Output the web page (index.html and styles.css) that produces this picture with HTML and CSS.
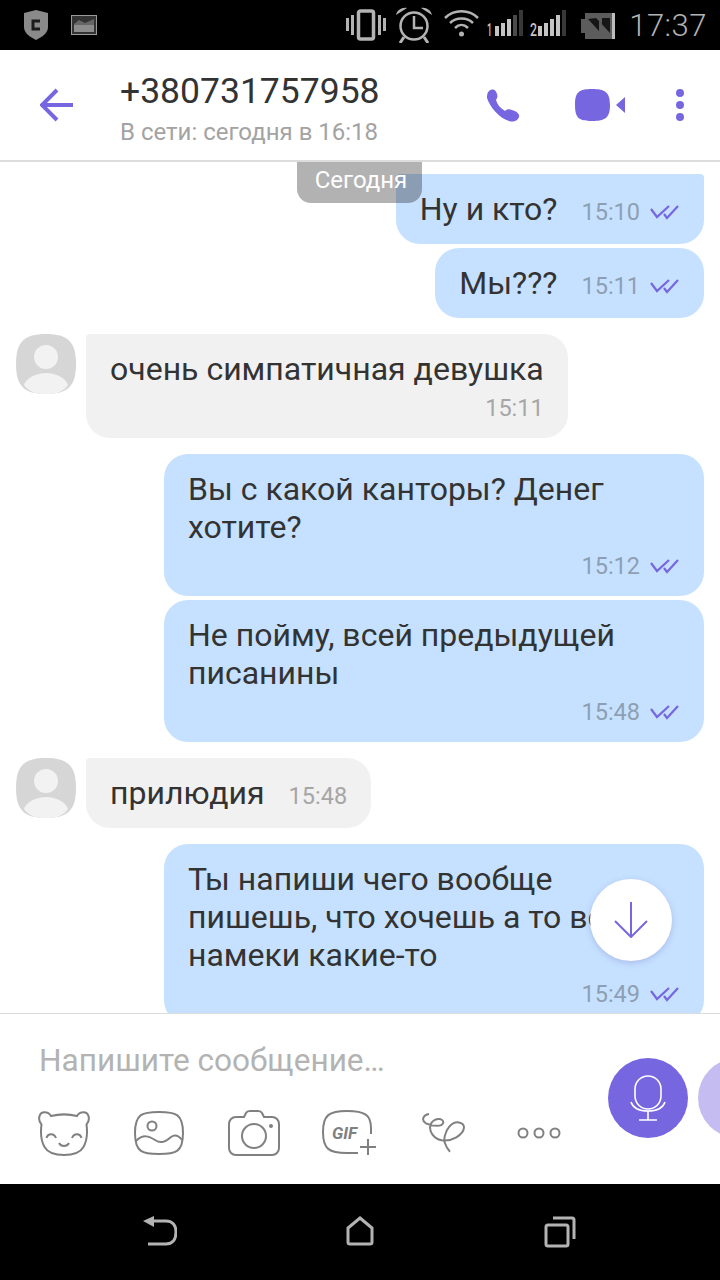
FILE: index.html
```html
<!DOCTYPE html>
<html lang="ru">
<head>
    <meta charset="UTF-8">
    <title>Чат</title>
    <link rel="stylesheet" href="styles.css">
</head>
<body>
    <svg class="defs">
        <symbol id="ticks" viewBox="0 0 30 16">
            <path d="M1 4 L7 12 L19 1 M14 9 L17 13 L28 1" fill="none" stroke="#7667e0" stroke-width="2.200"/>
        </symbol>
        <symbol id="avatar" viewBox="0 0 60 60">
            <path d="M30 0 C52 0 60 8 60 30 C60 52 52 60 30 60 C8 60 0 52 0 30 C0 8 8 0 30 0Z" fill="#d6d6d6"/>
            <circle cx="30" cy="23" r="12" fill="#f2f2f2"/>
            <path d="M8 51 C10 44 20 39 30 39 C40 39 50 44 52 51 C47 58 40 60 30 60 C20 60 13 58 8 51Z" fill="#f2f2f2"/>
        </symbol>
    </svg>

    <div class="app">
        <div class="status-bar">
            <div class="status-left">
                <svg width="24" height="30" viewBox="0 0 24 30"><path d="M12 0 L24 3 V17 C24 23 18 27 12 30 C6 27 0 23 0 17 V3Z" fill="#8a8a8a"/><path d="M16 11 H9 V19 H16" fill="none" stroke="#1c1c1c" stroke-width="3"/></svg>
                <svg width="26" height="20" viewBox="0 0 26 20"><rect x="0.5" y="0.5" width="25" height="19" fill="#333" stroke="#9a9a9a"/><rect x="3" y="10" width="20" height="7" fill="#8c8c8c"/><path d="M3 9 L8 5 L14 8 L23 4 V10 H3Z" fill="#666"/></svg>
            </div>
            <div class="status-right">
                <svg width="42" height="32" viewBox="0 0 42 32"><g fill="none" stroke="#b3b3b3"><rect x="13.500" y="2" width="15" height="28" rx="2" stroke-width="3.500"/><path d="M7.500 6 V26 M34.500 6 V26" stroke-width="3"/><path d="M2.500 9 V22 M39.500 9 V22" stroke-width="3"/></g></svg>
                <svg class="st-alarm" width="36" height="36" viewBox="0 0 36 36"><g fill="none" stroke="#b3b3b3"><circle cx="18" cy="19" r="13.500" stroke-width="2.500"/><path d="M18 9 V21 H27" stroke-width="2.500"/><path d="M8 30 L4 36 M28 30 L32 36" stroke-width="3"/></g><path d="M0 8 C1 3 6 0 11 1Z M36 8 C35 3 30 0 25 1Z" fill="#b3b3b3"/></svg>
                <svg class="st-wifi" width="35" height="28" viewBox="0 0 35 28"><g fill="none" stroke="#b3b3b3" stroke-width="2.500"><path d="M1 9 C10 0 25 0 34 9"/><path d="M6 14 C12 8 23 8 29 14"/><path d="M11 19 C15 15 20 15 24 19"/></g><circle cx="17.500" cy="25" r="2.500" fill="#b3b3b3"/></svg>
                <svg class="st-sim" width="36" height="34" viewBox="0 0 36 34"><text x="0" y="28" class="sim-num" textLength="5" lengthAdjust="spacingAndGlyphs">1</text><g fill="#c4c4c4"><rect x="8" y="18" width="4" height="10"/><rect x="14" y="15" width="4" height="13"/><rect x="20" y="11" width="4" height="17"/></g><rect x="26" y="7" width="4" height="21" fill="#4a4a4a"/><rect x="32" y="2" width="4" height="26" fill="#383838"/></svg>
                <svg class="st-sim2" width="37" height="34" viewBox="0 0 37 34"><text x="0" y="28" class="sim-num" textLength="7" lengthAdjust="spacingAndGlyphs">2</text><g fill="#c4c4c4"><rect x="8" y="18" width="4" height="10"/><rect x="14" y="15" width="4" height="13"/><rect x="20" y="11" width="4" height="17"/><rect x="26" y="7" width="4" height="21"/></g><rect x="32" y="2" width="4" height="26" fill="#383838"/></svg>
                <svg class="st-battery" width="34" height="26" viewBox="0 0 34 26"><rect x="0" y="6" width="4" height="14" fill="#5c5c5c"/><rect x="4" y="0" width="27" height="26" fill="#5c5c5c"/><path d="M7 6 L18 18 V8 L29 20 V5 H21 V11 L15 5Z" fill="#161616"/><rect x="31" y="0" width="3" height="26" fill="#bdbdbd"/></svg>
                <span class="clock">17:37</span>
            </div>
        </div>

        <div class="chat-header">
            <svg class="back" width="34" height="34" viewBox="0 0 34 34"><path d="M33 17 H3 M17 2 L2 17 L17 32" fill="none" stroke="#7667e0" stroke-width="4"/></svg>
            <div class="contact">
                <div class="contact-phone">+380731757958</div>
                <div class="contact-seen">В сети: сегодня в 16:18</div>
            </div>
            <svg class="act-call" width="33" height="33" viewBox="0 0 33 33"><path d="M2 2 C6 -1 9 1 10 5 C11 8 10 9 9 11 C10 15 13 19 18 22 C20 20 22 20 25 21 C29 22 33 25 32 28 C30 33 25 33 22 32 C12 29 3 18 0 9 C0 6 0 4 2 2Z" fill="#7667e0"/></svg>
            <svg class="act-video" width="50" height="32" viewBox="0 0 50 32"><path d="M17 0 C30 0 35 3 35 16 C35 29 30 32 17 32 C4 32 0 29 0 16 C0 3 4 0 17 0Z M41 16 L50 8 V24Z" fill="#7667e0"/></svg>
            <svg class="act-more" width="14" height="32" viewBox="0 0 14 32"><g fill="#7667e0"><circle cx="7" cy="4" r="4"/><circle cx="7" cy="16" r="4"/><circle cx="7" cy="28" r="4"/></g></svg>
        </div>

        <div class="chat">
            <div class="date-badge">Сегодня</div>

            <div class="msg sent msg-first inline">
                <span class="msg-text">Ну и кто?</span>
                <span class="msg-meta"><span class="msg-time">15:10</span><svg class="tick" width="30" height="16"><use href="#ticks"/></svg></span>
            </div>
            <div class="msg sent msg-near inline">
                <span class="msg-text">Мы???</span>
                <span class="msg-meta"><span class="msg-time">15:11</span><svg class="tick" width="30" height="16"><use href="#ticks"/></svg></span>
            </div>

            <div class="row-in">
                <svg class="avatar" width="60" height="60"><use href="#avatar"/></svg>
                <div class="msg received">
                    <div class="msg-text">очень симпатичная девушка</div>
                    <div class="msg-meta"><span class="msg-time">15:11</span></div>
                </div>
            </div>

            <div class="msg sent wide">
                <div class="msg-text">Вы с какой канторы? Денег хотите?</div>
                <div class="msg-meta"><span class="msg-time">15:12</span><svg class="tick" width="30" height="16"><use href="#ticks"/></svg></div>
            </div>
            <div class="msg sent wide msg-near">
                <div class="msg-text">Не пойму, всей предыдущей писанины</div>
                <div class="msg-meta"><span class="msg-time">15:48</span><svg class="tick" width="30" height="16"><use href="#ticks"/></svg></div>
            </div>

            <div class="row-in">
                <svg class="avatar" width="60" height="60"><use href="#avatar"/></svg>
                <div class="msg received inline">
                    <span class="msg-text">прилюдия</span>
                    <span class="msg-meta"><span class="msg-time">15:48</span></span>
                </div>
            </div>

            <div class="msg sent wide">
                <div class="msg-text">Ты напиши чего вообще пишешь, что хочешь а то все намеки какие-то</div>
                <div class="msg-meta"><span class="msg-time">15:49</span><svg class="tick" width="30" height="16"><use href="#ticks"/></svg></div>
            </div>

            <div class="scroll-down">
                <svg width="34" height="36" viewBox="0 0 34 36"><path d="M17 0 V35 M1 19 L17 35 L33 19" fill="none" stroke="#7667e0" stroke-width="2"/></svg>
            </div>
        </div>

        <div class="composer">
            <div class="composer-main">
                <div class="placeholder">Напишите сообщение…</div>
                <div class="tools">
                    <div class="tool">
                        <svg width="52" height="46" viewBox="0 0 52 46"><g fill="none" stroke="#808080" stroke-width="2"><path d="M13 6 C10 1 3 1 1.500 6 C0.500 10 2 13 3.500 14.500 C2.500 22 2.500 30 6.500 37 C10 43 16 45 26 45 C36 45 42 43 45.500 37 C49.500 30 49.500 22 48.500 14.500 C50 13 51.500 10 50.500 6 C49 1 42 1 39 6 C31 4 21 4 13 6Z"/><path d="M8.500 28 C10 23 16 23 18 28"/><path d="M34 28 C36 23 42 23 43.500 28"/><path d="M21 33 C23 37 29 37 31 33"/></g></svg>
                    </div>
                    <div class="tool">
                        <svg width="50" height="44" viewBox="0 0 50 44"><g fill="none" stroke="#808080" stroke-width="2"><path d="M25 1 C42 1 49 3 49 22 C49 41 42 43 25 43 C8 43 1 41 1 22 C1 3 8 1 25 1Z"/><circle cx="18" cy="15" r="4.500"/><path d="M2 30 C9 23 15 25 21 29 C27 33 31 31 37 26 C41 23 45 25 48 29"/></g></svg>
                    </div>
                    <div class="tool">
                        <svg width="52" height="46" viewBox="0 0 52 46"><g fill="none" stroke="#808080" stroke-width="2"><path d="M16 7 L18 3 C19 1 20 1 22 1 H30 C32 1 33 1 34 3 L36 7 H44 C48 7 51 10 51 14 V38 C51 42 48 45 44 45 H8 C4 45 1 42 1 38 V14 C1 10 4 7 8 7Z"/><circle cx="26" cy="26" r="12"/></g><circle cx="43" cy="16" r="2" fill="#808080"/></svg>
                    </div>
                    <div class="tool">
                        <svg width="56" height="46" viewBox="0 0 56 46"><g fill="none" stroke="#808080" stroke-width="2"><path d="M50 24 V18 C50 5 44 1 26 1 C8 1 2 5 2 22 C2 39 8 43 26 43 H37"/><path d="M47 29 V45 M39 37 H55"/></g><text x="11" y="29" class="gif-label">GIF</text></svg>
                    </div>
                    <div class="tool">
                        <svg width="44" height="40" viewBox="0 0 44 40"><path d="M7 1 C1.300 2 -1.300 7 4 10.300 C9.700 13 21.300 14.700 21.300 9.300 C21.300 4.700 12 4.700 8.700 11.300 C6.300 18 11.300 25.300 19.700 27.300 C29.700 28.700 41.300 22 42 14.700 C42 8.700 33 7 27.300 13.700 C23 18.700 21.300 27 23 30.300 C24 33.700 25.700 36.300 28 38.700" fill="none" stroke="#808080" stroke-width="2"/></svg>
                    </div>
                    <div class="tool">
                        <svg width="44" height="12" viewBox="0 0 44 12"><g fill="none" stroke="#808080" stroke-width="2"><circle cx="6" cy="6" r="4.500"/><circle cx="22" cy="6" r="4.500"/><circle cx="38" cy="6" r="4.500"/></g></svg>
                    </div>
                </div>
            </div>
            <div class="send-buttons">
                <div class="round-btn mic">
                    <svg width="36" height="46" viewBox="0 0 36 46"><g fill="none" stroke="#fff" stroke-width="1.600"><rect x="5" y="1" width="26" height="33" rx="13"/><path d="M1 27 C3 33 9 36 18 36 C27 36 33 33 35 27"/><path d="M18 36 V45 M9 45 H27"/></g></svg>
                </div>
                <div class="round-btn second"></div>
            </div>
        </div>

        <div class="nav-bar">
            <div class="nav-item">
                <svg width="34" height="30" viewBox="0 0 34 30"><path d="M5 5 H23 C29 5 33 9 33 16 C33 24 29 28 23 28 H5" fill="none" stroke="#b3b3b3" stroke-width="3"/><path d="M0 5 L11 0 V11Z" fill="#b3b3b3"/></svg>
            </div>
            <div class="nav-item">
                <svg width="28" height="30" viewBox="0 0 28 30"><path d="M14 2 L26 12 V26 C26 27.500 25.500 28 24 28 H4 C2.500 28 2 27.500 2 26 V12Z" fill="none" stroke="#b3b3b3" stroke-width="3"/></svg>
            </div>
            <div class="nav-item">
                <svg width="32" height="32" viewBox="0 0 32 32"><g fill="none" stroke="#b3b3b3" stroke-width="3"><rect x="2" y="9" width="22" height="21" rx="2"/><path d="M9 2 H28 C29.500 2 30 2.500 30 4 V23"/></g></svg>
            </div>
        </div>
    </div>
</body>
</html>
```

FILE: styles.css
```css
html, body {
    margin: 0;
    padding: 0;
}
body {
    font-family: Roboto, "Noto Sans", sans-serif;
    color: #333;
    background-color: #fff;
}
.defs {
    display: none;
}
svg {
    display: block;
    flex: none;
}
.app {
    width: 720px;
    height: 1280px;
    display: flex;
    flex-direction: column;
    overflow: hidden;
}

/* status bar */
.status-bar {
    height: 50px;
    background-color: #000;
    display: flex;
    justify-content: space-between;
    align-items: center;
    padding: 0 13px 0 24px;
    flex: none;
}
.status-left, .status-right {
    display: flex;
    align-items: center;
}
.status-left {
    gap: 23px;
}
.st-alarm {
    margin-left: 9px;
}
.st-wifi {
    margin-left: 12px;
    margin-bottom: 4px;
}
.st-sim {
    margin-left: 8px;
}
.st-sim2 {
    margin-left: 7px;
}
.st-battery {
    margin-left: 14px;
    margin-top: 2px;
}
.sim-num {
    font-family: Roboto, sans-serif;
    font-size: 19px;
    font-weight: 500;
    fill: #c4c4c4;
}
.clock {
    margin-left: 14px;
    font-size: 31px;
    font-weight: 300;
    letter-spacing: 0.5px;
    color: #b3b3b3;
}

/* header */
.chat-header {
    height: 110px;
    display: flex;
    align-items: center;
    border-bottom: 2px solid #dcdcdc;
    flex: none;
}
.back {
    margin-left: 40px;
}
.contact {
    margin-left: 46px;
    padding-top: 7px;
    flex: 1;
}
.contact-phone {
    font-size: 35.500px;
    line-height: 44px;
}
.contact-seen {
    margin-top: 3px;
    font-size: 24px;
    line-height: 32px;
    color: #a3a3a3;
}
.act-video {
    margin-left: 55px;
}
.act-more {
    margin-left: 48px;
    margin-right: 33px;
}

/* messages */
.chat {
    flex: 1 1 0;
    min-height: 0;
    position: relative;
    overflow: hidden;
    display: flex;
    flex-direction: column;
    align-items: flex-end;
    padding-top: 12px;
}
.msg {
    box-sizing: border-box;
    padding: 16px 24px 11px;
    border-radius: 24px;
    font-size: 32px;
    line-height: 38px;
    margin-top: 16px;
    flex: none;
}
.msg-first {
    margin-top: 0;
    border-top-left-radius: 4px;
    border-top-right-radius: 4px;
}
.msg-near {
    margin-top: 4px;
}
.sent {
    background-color: #c6e1ff;
    margin-right: 16px;
}
.wide {
    width: 540px;
}
.received {
    background-color: #f1f1f1;
    margin-top: 0;
    border-top-left-radius: 4px;
}
.inline {
    display: flex;
    gap: 24px;
    padding-bottom: 13px;
}
.msg-meta {
    display: flex;
    justify-content: flex-end;
    align-items: center;
    gap: 10px;
    padding-top: 1px;
}
.inline .msg-meta {
    padding-top: 3px;
}
.msg-time {
    font-size: 23.500px;
    color: #8e9fb2;
}
.received .msg-time {
    color: #a6a6a6;
}
.tick {
    margin-top: 2px;
}
.row-in {
    align-self: flex-start;
    display: flex;
    gap: 10px;
    margin: 16px 0 0 16px;
}
.date-badge {
    position: absolute;
    top: 0;
    left: 297px;
    width: 125px;
    height: 41px;
    padding-left: 3px;
    box-sizing: border-box;
    line-height: 36px;
    text-align: center;
    font-size: 24px;
    color: #fff;
    background-color: rgba(0, 0, 0, 0.3);
    border-radius: 0 0 14px 14px;
}
.scroll-down {
    position: absolute;
    left: 590px;
    top: 717px;
    width: 82px;
    height: 82px;
    border-radius: 50%;
    background-color: #fff;
    box-shadow: 0 2px 6px rgba(90, 80, 180, 0.25);
    display: flex;
    align-items: center;
    justify-content: center;
}

/* composer */
.composer {
    height: 170px;
    border-top: 1px solid #dcdcdc;
    display: flex;
    flex: none;
    background-color: #fff;
}
.composer-main {
    width: 608px;
    flex: none;
}
.placeholder {
    padding: 28px 0 0 39px;
    font-size: 31.600px;
    line-height: 38px;
    color: #b3b3b3;
}
.tools {
    display: flex;
    padding: 30px 0 0 16px;
}
.tool {
    width: 95px;
    height: 46px;
    flex: none;
    display: flex;
    align-items: center;
    justify-content: center;
}
.gif-label {
    font-family: Roboto, sans-serif;
    font-size: 17px;
    font-weight: 700;
    font-style: italic;
    fill: #808080;
}
.send-buttons {
    display: flex;
    gap: 10px;
    padding-top: 44px;
    flex: none;
}
.round-btn {
    width: 80px;
    height: 80px;
    border-radius: 50%;
    flex: none;
    display: flex;
    align-items: center;
    justify-content: center;
}
.mic {
    background-color: #7667e0;
}
.second {
    background-color: #c5bdf2;
}

/* navigation */
.nav-bar {
    height: 96px;
    box-sizing: border-box;
    flex: none;
    background-color: #000;
    display: flex;
    justify-content: center;
    padding-top: 32px;
}
.nav-item {
    width: 200px;
    display: flex;
    justify-content: center;
}
```
